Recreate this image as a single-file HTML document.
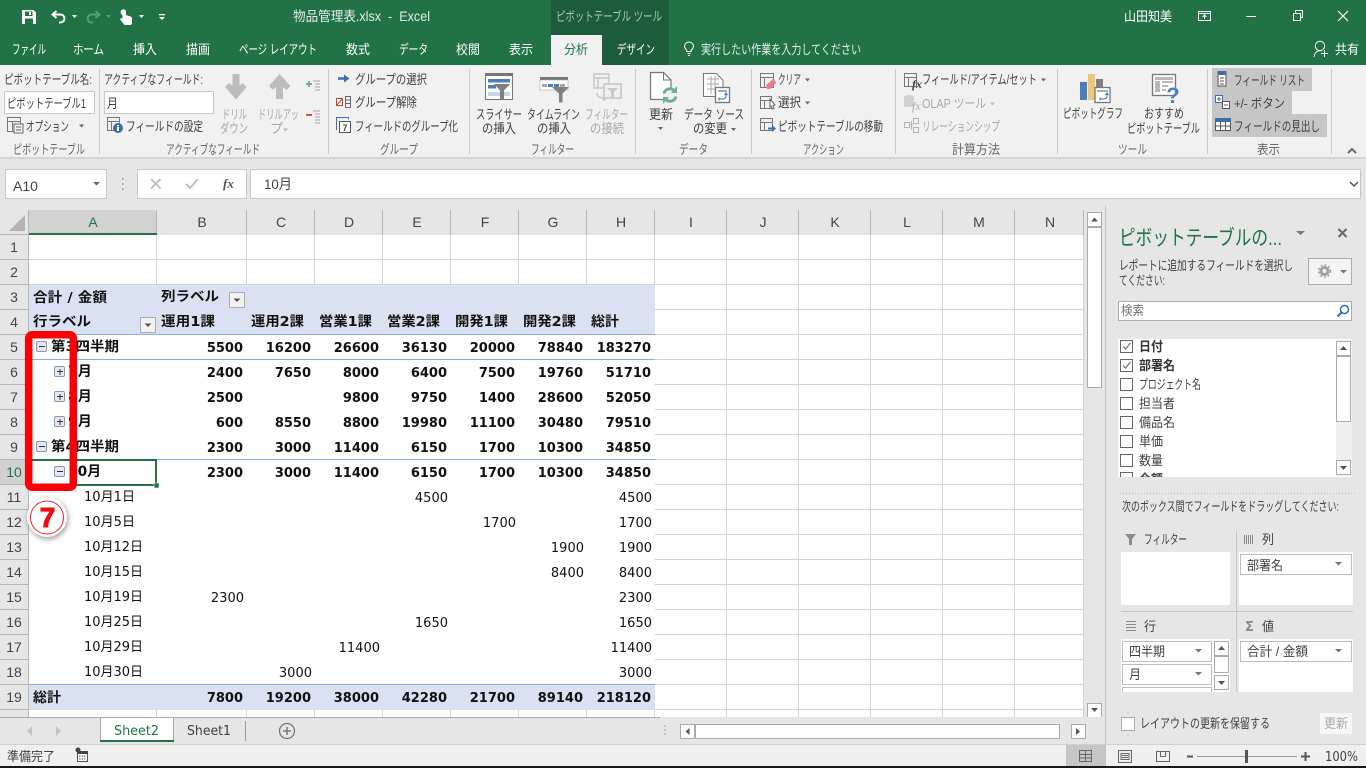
<!DOCTYPE html>
<html lang="ja"><head><meta charset="utf-8"><title>物品管理表.xlsx - Excel</title>
<style>
html,body{margin:0;padding:0;width:1366px;height:768px;overflow:hidden;background:#e6e6e6}
svg{display:block;position:absolute;left:0;top:0}
text{font-family:"Liberation Sans","Noto Sans CJK JP",sans-serif;font-size:13px;fill:#404040;white-space:pre}
.w{fill:#fff;font-size:13px}
.g{fill:#a8a8a8}
.l{fill:#666}
.c{font-family:"DejaVu Sans","Noto Sans CJK JP",sans-serif;font-size:13px;fill:#111}
.b{font-family:"DejaVu Sans","Noto Sans CJK JP",sans-serif;font-size:13px;font-weight:700;fill:#111}
.h{font-size:14px;fill:#444}
.n{text-anchor:middle}
.e{text-anchor:end}
.ln{shape-rendering:crispEdges}
</style></head><body>
<svg width="1366" height="768" viewBox="0 0 1366 768" xmlns="http://www.w3.org/2000/svg">
<!-- title bar -->
<rect width="1366" height="65" fill="#217346"/>
<rect x="551" width="118" height="65" fill="#1d5c3a"/>
<rect x="551" y="35" width="51" height="31" fill="#f1f1f1"/>
<path fill="#fff" fill-rule="evenodd" d="M22 10h11.500l2.500 2.500V24H22zM25 11.500v4.500h7.500v-4.500zM25 18.500V24h8v-5.500z"/>
<rect x="29" y="12" width="2" height="3" fill="#fff"/>
<path fill="none" stroke="#fff" stroke-width="2" d="M56.500 11L52.500 14.500l4 3.500M53 14.500h7.500a4 4 0 0 1 0 8h-1.500"/>
<path fill="#fff" d="M72 15h5l-2.500 3z"/>
<path fill="none" stroke="#5c9a79" stroke-width="2" d="M95.500 11l4 3.500-4 3.500M99 14.500h-7.500a4 4 0 0 0 0 8H93"/>
<path fill="#5c9a79" d="M106 15h5l-2.500 3z"/>
<path fill="#fff" d="M121 10.500a3 3 0 0 1 5 .5v4l4.500 1.500c1.500.6 1.500 1.500 1.500 2.500v4.500l-1 1.500h-6.500l-4-5c-.7-1.500.5-2.500 2-1.500V15.500a4 4 0 0 1-1.500-5z"/>
<path fill="#fff" d="M139 15h5l-2.500 3z"/>
<path fill="#fff" d="M159 14h6v1.300h-6zM159 17h6l-3 3z"/>
<text x="293" y="21" class="w" style="font-size:13.500px;fill:#e4eee8" textLength="137" lengthAdjust="spacingAndGlyphs">物品管理表.xlsx  -  Excel</text>
<text x="556" y="21" style="fill:#a9c8b6" textLength="106" lengthAdjust="spacingAndGlyphs">ピボットテーブル ツール</text>
<text x="1124" y="21" class="w" textLength="48" lengthAdjust="spacingAndGlyphs">山田知美</text>
<path fill="none" stroke="#fff" d="M1198.500 11.500h12v9h-12zM1198.500 13.500h12M1204.500 19v-4M1202.500 17l2-2 2 2"/>
<rect x="1246" y="16" width="10" height="1" fill="#fff"/>
<path fill="none" stroke="#fff" d="M1293.500 13.500h7v7h-7zM1295.500 13v-2.500h7v7H1301"/>
<path fill="none" stroke="#fff" stroke-width="1.100" d="M1338 11l10 10M1348 11l-10 10"/>
<!-- tabs -->
<text x="12" y="54" class="w" textLength="34" lengthAdjust="spacingAndGlyphs">ファイル</text>
<text x="73" y="54" class="w" textLength="31" lengthAdjust="spacingAndGlyphs">ホーム</text>
<text x="133" y="54" class="w" textLength="24" lengthAdjust="spacingAndGlyphs">挿入</text>
<text x="186" y="54" class="w" textLength="24" lengthAdjust="spacingAndGlyphs">描画</text>
<text x="239" y="54" class="w" textLength="78" lengthAdjust="spacingAndGlyphs">ページ レイアウト</text>
<text x="346" y="54" class="w" textLength="24" lengthAdjust="spacingAndGlyphs">数式</text>
<text x="399" y="54" class="w" textLength="29" lengthAdjust="spacingAndGlyphs">データ</text>
<text x="456" y="54" class="w" textLength="24" lengthAdjust="spacingAndGlyphs">校閲</text>
<text x="509" y="54" class="w" textLength="24" lengthAdjust="spacingAndGlyphs">表示</text>
<text x="564" y="54" style="fill:#217346" textLength="24" lengthAdjust="spacingAndGlyphs">分析</text>
<text x="617" y="54" class="w" textLength="38" lengthAdjust="spacingAndGlyphs">デザイン</text>
<path fill="none" stroke="#fff" stroke-width="1" d="M687 51.500c0-2-2.500-3-2.500-5a4.500 4.500 0 0 1 9 0c0 2-2.500 3-2.500 5zM687.500 53.500h3M688 55.500h2"/>
<text x="701" y="54" style="fill:#e6efe9" textLength="160" lengthAdjust="spacingAndGlyphs">実行したい作業を入力してください</text>
<circle cx="1320" cy="46" r="4.700" fill="none" stroke="#fff"/>
<path fill="none" stroke="#fff" d="M1314 57c.5-4 2.500-6 6-6.500M1321 53.500h7M1324.500 50v7"/>
<text x="1335" y="54" class="w" textLength="24" lengthAdjust="spacingAndGlyphs">共有</text>
<!-- ribbon -->
<rect y="65" width="1366" height="92" fill="#f1f1f1"/>
<rect y="157" width="1366" height="2" fill="#d5d5d5" class="ln"/>
<g fill="#c9c9c9" class="ln">
<rect x="99" y="69" width="1" height="85"/><rect x="328" y="69" width="1" height="85"/><rect x="469" y="69" width="1" height="85"/><rect x="635" y="69" width="1" height="85"/><rect x="751" y="69" width="1" height="85"/><rect x="895" y="69" width="1" height="85"/><rect x="1057" y="69" width="1" height="85"/><rect x="1207" y="69" width="1" height="85"/><rect x="1331" y="69" width="1" height="85"/>
</g>
<!-- pivot table group -->
<text x="4" y="84" textLength="88" lengthAdjust="spacingAndGlyphs">ピボットテーブル名:</text>
<rect x="4.500" y="91.500" width="90" height="22" fill="#fff" stroke="#c6c6c6"/>
<text x="7" y="108" textLength="79" lengthAdjust="spacingAndGlyphs">ピボットテーブル1</text>
<g fill="none" stroke="#777"><path d="M7.500 117.500h13v14h-13zM7.500 121.500h13M12.500 122v9"/></g>
<rect x="14" y="124" width="9" height="9" fill="#f1f1f1" stroke="#666"/>
<path d="M16 127h5M16 130h5" stroke="#666"/>
<text x="26" y="131" textLength="43" lengthAdjust="spacingAndGlyphs">オプション</text>
<path fill="#666" d="M79 124.500h5l-2.500 3z"/>
<text x="13" y="154" class="l" textLength="72" lengthAdjust="spacingAndGlyphs">ピボットテーブル</text>
<!-- active field -->
<text x="104" y="84" textLength="99" lengthAdjust="spacingAndGlyphs">アクティブなフィールド:</text>
<rect x="104.500" y="91.500" width="109" height="22" fill="#fff" stroke="#c6c6c6"/>
<text x="107" y="108" textLength="11" lengthAdjust="spacingAndGlyphs">月</text>
<path fill="none" stroke="#777" d="M107.500 117.500h12v13h-12zM107.500 121.500h12M111.500 122v8"/>
<circle cx="118" cy="128" r="5" fill="#3e6ea8"/><rect x="117" y="127" width="2" height="4" fill="#fff"/><rect x="117" y="125" width="2" height="1.300" fill="#fff"/>
<text x="126" y="131" textLength="77" lengthAdjust="spacingAndGlyphs">フィールドの設定</text>
<path fill="#bcbcbc" d="M232.500 74h7v12l3-3 4 4-10.500 12.500L225 87l4-4 3.500 3z"/>
<path fill="#bcbcbc" d="M276 99h7V87l3.500 3 4-4L279.500 74 269 86l4 4 3-3z"/>
<text x="222" y="119" class="g" textLength="25" lengthAdjust="spacingAndGlyphs">ドリル</text>
<text x="220" y="133" class="g" textLength="28" lengthAdjust="spacingAndGlyphs">ダウン</text>
<text x="258" y="119" class="g" textLength="41" lengthAdjust="spacingAndGlyphs">ドリルアッ</text>
<text x="270" y="133" class="g">プ</text>
<path fill="#bbb" d="M283 128.500h5l-2.500 3z"/>
<path d="M306 84h6M309 81v6" stroke="#6fb191" stroke-width="2" class="ln"/>
<path d="M313 81h7M315 84h5M315 87h5M315 90h5" stroke="#a5a5a5" class="ln"/>
<path d="M306 115h6" stroke="#d2573a" stroke-width="2" class="ln"/>
<path d="M313 111h7M315 114h5M315 117h5M315 120h5M315 123h5" stroke="#a5a5a5" class="ln"/>
<text x="166" y="154" class="l" textLength="94" lengthAdjust="spacingAndGlyphs">アクティブなフィールド</text>
<!-- group -->
<path d="M338 78.500h7" stroke="#3b70ad" stroke-width="2.500"/><path d="M344 74.500l5.500 4-5.500 4z" fill="#3b70ad"/>
<text x="355" y="84" textLength="72" lengthAdjust="spacingAndGlyphs">グループの選択</text>
<rect x="336.500" y="98.500" width="6" height="7" fill="#fff" stroke="#c8452a"/><path d="M337 105l5-6" stroke="#c8452a"/>
<path fill="none" stroke="#667" d="M345.500 96.500h5v11h-5zM346 100h4M346 103.500h4"/>
<text x="355" y="107" textLength="62" lengthAdjust="spacingAndGlyphs">グループ解除</text>
<path fill="none" stroke="#3e6ea8" d="M336.500 130v-12.500h12v2"/><rect x="339.500" y="121.500" width="11" height="11" fill="#fff" stroke="#555"/>
<text x="345" y="131" class="n" style="font-size:9px;font-weight:700;fill:#444">7</text>
<text x="355" y="131" textLength="103" lengthAdjust="spacingAndGlyphs">フィールドのグループ化</text>
<text x="380" y="154" class="l" textLength="38" lengthAdjust="spacingAndGlyphs">グループ</text>
<!-- filter -->
<rect x="485.500" y="74.500" width="27" height="25" fill="#fff" stroke="#777"/><rect x="485" y="73" width="28" height="3" fill="#777"/>
<rect x="488" y="79" width="22" height="3.500" fill="#4a7fbb"/><rect x="488" y="85" width="8" height="3.500" fill="#4a7fbb"/><rect x="488" y="92" width="22" height="4" fill="#c5d7ec"/>
<path fill="#808080" d="M494 84h16l-6 6.500V99h-4v-8.500z"/>
<rect x="540" y="77" width="28" height="3" fill="#777"/><rect x="540" y="80" width="28" height="10" fill="#fff" stroke="#999" stroke-width=".5"/>
<rect x="542" y="84" width="5" height="3" fill="#aaa"/><rect x="548" y="84" width="5" height="3" fill="#4a7fbb"/><rect x="554" y="84" width="5" height="3" fill="#4a7fbb"/><rect x="560" y="84" width="5" height="3" fill="#aaa"/>
<path fill="#808080" d="M552 87h17l-6.500 6.500v9h-3.500v-9z"/>
<path fill="none" stroke="#c8c8c8" stroke-width="1.500" d="M594 74h15v14h-15zM594 78h15M598 78v10M597 93c0 3 2 5 7 5"/><rect x="604" y="84" width="17" height="14" fill="#f0f0f0" stroke="#c4c4c4" stroke-width="1.500"/>
<path fill="#c8c8c8" d="M603 95l4 3.500-4 3.500zM607 88h11l-4 4v5h-3v-5z"/>
<text x="476" y="119" textLength="46" lengthAdjust="spacingAndGlyphs">スライサー</text>
<text x="482" y="133" textLength="34" lengthAdjust="spacingAndGlyphs">の挿入</text>
<text x="527" y="119" textLength="53" lengthAdjust="spacingAndGlyphs">タイムライン</text>
<text x="537" y="133" textLength="34" lengthAdjust="spacingAndGlyphs">の挿入</text>
<text x="585" y="119" class="g" textLength="43" lengthAdjust="spacingAndGlyphs">フィルター</text>
<text x="590" y="133" class="g" textLength="34" lengthAdjust="spacingAndGlyphs">の接続</text>
<text x="531" y="154" class="l" textLength="43" lengthAdjust="spacingAndGlyphs">フィルター</text>
<!-- data -->
<path fill="#fff" stroke="#777" stroke-width="1.200" d="M650.500 72.500h13l7.500 7.500v19.500h-20.500z"/><path fill="none" stroke="#777" d="M663.500 72.500v7.500h7.500"/>
<circle cx="670" cy="95" r="7" fill="#f1f1f1"/><path fill="none" stroke="#6fb091" stroke-width="3" d="M664 93.500a6 6 0 0 1 10.500-2.500M676 96.500a6 6 0 0 1-10.500 2.500"/><path fill="#6fb091" d="M677 86v7h-6zM663 104v-7h6z"/>
<path fill="#fff" stroke="#777" d="M703.500 73.500h13l6.500 7v16h-19.500z"/><path fill="none" stroke="#aaa" d="M707 79h12M707 84h12M707 89h12M711 76v18M715 76v18"/><rect x="715.500" y="87.500" width="14" height="15" fill="#fff" stroke="#777" stroke-width="1.300"/><rect x="718" y="90" width="9" height="2" fill="#aaa"/><path fill="none" stroke="#2f6fb5" d="M719 99h4a3 3 0 0 0 3-3v-2M719 97.500v3M724.500 95l1.500-2 1.500 2"/>
<text x="649" y="119" textLength="24" lengthAdjust="spacingAndGlyphs">更新</text>
<path fill="#666" d="M658 127h5l-2.500 3z"/>
<text x="684" y="119" textLength="60" lengthAdjust="spacingAndGlyphs">データ ソース</text>
<text x="693" y="133" textLength="34" lengthAdjust="spacingAndGlyphs">の変更</text>
<path fill="#666" d="M731 128h5l-2.500 3z"/>
<text x="679" y="154" class="l" textLength="29" lengthAdjust="spacingAndGlyphs">データ</text>
<!-- action -->
<path fill="none" stroke="#777" d="M760.500 73.500h13v14h-13zM760.500 77.500h13M764.500 78v9"/>
<path fill="#e9808f" d="M766 85l7-6 3.500 3.500-6.500 6.500h-3z"/>
<text x="778" y="84" textLength="23" lengthAdjust="spacingAndGlyphs">クリア</text>
<path fill="#666" d="M805 78.500h5l-2.500 3z"/>
<path fill="none" stroke="#777" d="M760.500 96.500h11v12h-11zM760.500 100.500h11M764.500 101v8"/>
<path fill="#fff" stroke="#666" d="M770 99l5 6-2 .5 1 3-1.500.5-1.500-3-1 1z"/>
<text x="778" y="107" textLength="23" lengthAdjust="spacingAndGlyphs">選択</text>
<path fill="#666" d="M805 101.500h5l-2.500 3z"/>
<path fill="none" stroke="#777" d="M760.500 118.500h12v12h-12zM760.500 122.500h12M764.500 123v8"/>
<path d="M768 128.500h5" stroke="#2f6fb5" stroke-width="2"/><path fill="#2f6fb5" d="M772 125l4 3.500-4 3.500z"/>
<text x="778" y="131" textLength="105" lengthAdjust="spacingAndGlyphs">ピボットテーブルの移動</text>
<text x="803" y="154" class="l" textLength="41" lengthAdjust="spacingAndGlyphs">アクション</text>
<!-- calc -->
<path fill="none" stroke="#777" d="M904.500 73.500h12v13h-12zM904.500 77.500h12M908.500 78v8"/>
<text x="912" y="88" style="font-family:'Liberation Serif',serif;font-style:italic;font-size:12px;font-weight:700;fill:#444">fx</text>
<text x="922" y="84" textLength="115" lengthAdjust="spacingAndGlyphs">フィールド/アイテム/セット</text>
<path fill="#666" d="M1041 78.500h5l-2.500 3z"/>
<ellipse cx="909" cy="97" rx="5" ry="2" fill="#d0d0d0"/><rect x="904" y="97" width="10" height="10" fill="#d0d0d0"/>
<text x="912" y="110" style="font-family:'Liberation Serif',serif;font-style:italic;font-size:12px;fill:#aaa">fx</text>
<text x="922" y="108" class="g" textLength="64" lengthAdjust="spacingAndGlyphs">OLAP ツール</text>
<path fill="#bbb" d="M990 102.500h5l-2.500 3z"/>
<path fill="none" stroke="#b5b5b5" d="M904.500 122.500h5v5h-5zM913.500 118.500h5v5h-5zM913.500 127.500h5v5h-5zM909.500 125h4M911.500 121v9"/>
<text x="922" y="131" class="g" textLength="78" lengthAdjust="spacingAndGlyphs">リレーションシップ</text>
<text x="952" y="154" class="l" textLength="48" lengthAdjust="spacingAndGlyphs">計算方法</text>
<!-- tools -->
<rect x="1080" y="82" width="7" height="18" fill="#4a7fbb"/><rect x="1088" y="74" width="7" height="26" fill="#eec77a"/><rect x="1096" y="79" width="7" height="8" fill="#808080"/>
<rect x="1095" y="87.500" width="15" height="15" fill="#fff" stroke="#777" stroke-width="1.300"/><rect x="1097" y="90" width="11" height="2" fill="#aaa"/><path fill="none" stroke="#2f6fb5" d="M1100 99h4a3 3 0 0 0 3-3v-2M1100 97.500v3M1105.500 95l1.500-2 1.500 2"/>
<rect x="1152.500" y="74.500" width="23" height="21" fill="#fff" stroke="#777" stroke-width="1.300"/><path fill="#b8b8b8" d="M1155 77h18v3h-18zM1155 81h5v11h-5zM1162 81h11v2h-11zM1162 85h6v2h-6zM1162 89h4v2h-4z"/>
<text x="1173" y="103" class="n" style="font-size:22px;font-weight:700;fill:#4a7fbb;font-family:'Liberation Sans',sans-serif">?</text>
<text x="1063" y="118" textLength="60" lengthAdjust="spacingAndGlyphs">ピボットグラフ</text>
<text x="1144" y="118" textLength="40" lengthAdjust="spacingAndGlyphs">おすすめ</text>
<text x="1127" y="133" textLength="73" lengthAdjust="spacingAndGlyphs">ピボットテーブル</text>
<text x="1118" y="154" class="l" textLength="29" lengthAdjust="spacingAndGlyphs">ツール</text>
<!-- show -->
<g fill="#c6c6c6"><rect x="1212" y="68" width="100" height="23"/><rect x="1212" y="91" width="80" height="23"/><rect x="1212" y="114" width="115" height="23"/></g>
<rect x="1218" y="72" width="8" height="14" fill="#fff" stroke="#555"/><rect x="1218" y="71" width="8" height="4" fill="#3e6ea8"/><path d="M1220 78h4M1220 81h4M1220 84h4" stroke="#555"/>
<rect x="1215.500" y="95.500" width="7" height="7" fill="#fff" stroke="#3e6ea8"/><path d="M1217 99h4M1219 97v4" stroke="#3e6ea8"/>
<rect x="1222.500" y="101.500" width="7" height="7" fill="#fff" stroke="#555"/><path d="M1224 105h4" stroke="#3e6ea8"/>
<rect x="1215.500" y="118.500" width="15" height="12" fill="#fff" stroke="#555"/><rect x="1215" y="118" width="16" height="4" fill="#3e6ea8"/><path d="M1216 126h14M1220.500 122v8M1225.500 122v8" stroke="#555"/>
<text x="1234" y="85" textLength="71" lengthAdjust="spacingAndGlyphs">フィールド リスト</text>
<text x="1234" y="108" textLength="51" lengthAdjust="spacingAndGlyphs">+/- ボタン</text>
<text x="1234" y="131" textLength="86" lengthAdjust="spacingAndGlyphs">フィールドの見出し</text>
<text x="1257" y="154" class="l" textLength="23" lengthAdjust="spacingAndGlyphs">表示</text>
<path fill="none" stroke="#666" stroke-width="2" d="M1348 153l4-4 4 4"/>
<!-- formula bar -->
<rect x="5.500" y="169.500" width="101" height="29" fill="#fff" stroke="#c6c6c6"/>
<text x="13" y="191" class="h">A10</text>
<path fill="#666" d="M93 182h7l-3.500 3.500z"/>
<path d="M122 179h1.500M122 184h1.500M122 189h1.500" stroke="#aaa" stroke-width="2"/>
<rect x="137.500" y="169.500" width="109" height="29" fill="#fff" stroke="#c6c6c6"/>
<rect x="250.500" y="169.500" width="1110" height="29" fill="#fff" stroke="#c6c6c6"/>
<path fill="none" stroke="#bdbdbd" stroke-width="1.800" d="M151 179l9.500 9.500M160.500 179l-9.500 9.500"/>
<path fill="none" stroke="#bdbdbd" stroke-width="2" d="M186 184l4 4 8-9"/>
<text x="223" y="188" style="font-family:'Liberation Serif',serif;font-style:italic;font-weight:700;font-size:13px;fill:#555">fx</text>
<text x="264" y="189" class="h" textLength="28" lengthAdjust="spacingAndGlyphs">10月</text>
<path fill="none" stroke="#555" stroke-width="1.500" d="M1350 182l4 4 4-4"/>
<!-- sheet area -->
<rect x="0" y="210" width="1084" height="507" fill="#fff"/>
<g stroke="#d4d4d4" class="ln">
<path d="M156.500 235V717M246.500 235V717M314.500 235V717M382.500 235V717M450.500 235V717M518.500 235V717M586.500 235V717M654.500 235V717M726.500 235V717M798.500 235V717M870.500 235V717M942.500 235V717M1014.500 235V717M1083.500 235V717"/>
<path d="M29 259.500H1084M29 284.500H1084M29 309.500H1084M29 334.500H1084M29 359.500H1084M29 384.500H1084M29 409.500H1084M29 434.500H1084M29 459.500H1084M29 484.500H1084M29 509.500H1084M29 534.500H1084M29 559.500H1084M29 584.500H1084M29 609.500H1084M29 634.500H1084M29 659.500H1084M29 684.500H1084M29 709.500H1084"/>
</g>
<rect x="29" y="285" width="626" height="425" fill="#fff"/>
<rect x="29" y="285" width="626" height="50" fill="#d9e1f2"/>
<rect x="29" y="685" width="626" height="25" fill="#d9e1f2"/>
<path d="M29 334.500H655M29 359.500H655M29 459.500H655M29 684.500H655" stroke="#8ea9db" class="ln"/>
<!-- headers -->
<rect x="0" y="210" width="1084" height="25" fill="#e6e6e6"/>
<rect x="0" y="235" width="28" height="482" fill="#e6e6e6"/>
<rect x="29" y="210" width="127" height="24" fill="#d2d2d2"/>
<rect x="29" y="233" width="128" height="2" fill="#217346"/>
<rect x="0" y="460" width="28" height="25" fill="#d2d2d2"/>
<path fill="#b4b4b4" d="M25 215v16H9z"/>
<g stroke="#b6b6b6" class="ln">
<path d="M28.500 210V717M156.500 210V233M246.500 210V235M314.500 210V235M382.500 210V235M450.500 210V235M518.500 210V235M586.500 210V235M654.500 210V235M726.500 210V235M798.500 210V235M870.500 210V235M942.500 210V235M1014.500 210V235M1083.500 210V235"/>
<path d="M0 234.500H28M0 259.500H28M0 284.500H28M0 309.500H28M0 334.500H28M0 359.500H28M0 384.500H28M0 409.500H28M0 434.500H28M0 459.500H28M0 484.500H28M0 509.500H28M0 534.500H28M0 559.500H28M0 584.500H28M0 609.500H28M0 634.500H28M0 659.500H28M0 684.500H28M0 709.500H28"/>
</g>
<g class="h">
<text x="93" y="227" class="h n" style="fill:#217346">A</text><text x="202" y="227" class="h n">B</text><text x="281" y="227" class="h n">C</text><text x="349" y="227" class="h n">D</text><text x="417" y="227" class="h n">E</text><text x="485" y="227" class="h n">F</text><text x="553" y="227" class="h n">G</text><text x="621" y="227" class="h n">H</text><text x="691" y="227" class="h n">I</text><text x="763" y="227" class="h n">J</text><text x="835" y="227" class="h n">K</text><text x="907" y="227" class="h n">L</text><text x="979" y="227" class="h n">M</text><text x="1050" y="227" class="h n">N</text>
<text x="14" y="252" class="h n">1</text><text x="14" y="277" class="h n">2</text><text x="14" y="302" class="h n">3</text><text x="14" y="327" class="h n">4</text><text x="14" y="352" class="h n">5</text><text x="14" y="377" class="h n">6</text><text x="14" y="402" class="h n">7</text><text x="14" y="427" class="h n">8</text><text x="14" y="452" class="h n">9</text><text x="14" y="477" class="h n" style="fill:#217346">10</text><text x="14" y="502" class="h n">11</text><text x="14" y="527" class="h n">12</text><text x="14" y="552" class="h n">13</text><text x="14" y="577" class="h n">14</text><text x="14" y="602" class="h n">15</text><text x="14" y="627" class="h n">16</text><text x="14" y="652" class="h n">17</text><text x="14" y="677" class="h n">18</text><text x="14" y="702" class="h n">19</text>
</g>
<!-- pivot headers -->
<text x="33" y="302" class="b" textLength="74" lengthAdjust="spacingAndGlyphs" style="font-size:13.500px">合計 / 金額</text>
<text x="161" y="301" class="b" textLength="58" lengthAdjust="spacingAndGlyphs" style="font-size:13.500px">列ラベル</text>
<text x="33" y="326" class="b" textLength="58" lengthAdjust="spacingAndGlyphs" style="font-size:13.500px">行ラベル</text>
<text x="161" y="326" class="b" textLength="54" lengthAdjust="spacingAndGlyphs" style="font-size:13.500px">運用1課</text>
<text x="251" y="326" class="b" textLength="53" lengthAdjust="spacingAndGlyphs" style="font-size:13.500px">運用2課</text>
<text x="319" y="326" class="b" textLength="53" lengthAdjust="spacingAndGlyphs" style="font-size:13.500px">営業1課</text>
<text x="387" y="326" class="b" textLength="53" lengthAdjust="spacingAndGlyphs" style="font-size:13.500px">営業2課</text>
<text x="455" y="326" class="b" textLength="53" lengthAdjust="spacingAndGlyphs" style="font-size:13.500px">開発1課</text>
<text x="523" y="326" class="b" textLength="53" lengthAdjust="spacingAndGlyphs" style="font-size:13.500px">開発2課</text>
<text x="591" y="326" class="b" textLength="28" lengthAdjust="spacingAndGlyphs" style="font-size:13.500px">総計</text>
<rect x="229.500" y="292.500" width="15" height="15" fill="#f2f2f2" stroke="#ababab"/><path fill="#555" d="M233.500 298.500h7l-3.500 3.500z"/>
<rect x="140.500" y="317.500" width="15" height="15" fill="#f2f2f2" stroke="#ababab"/><path fill="#555" d="M144.500 323.500h7l-3.500 3.500z"/>
<!-- row labels -->
<text x="51" y="351" class="b" textLength="68" lengthAdjust="spacingAndGlyphs" style="font-size:13.500px">第3四半期</text>
<text x="68" y="376" class="b" style="font-size:14px">7月</text><text x="68" y="401" class="b" style="font-size:14px">8月</text><text x="68" y="426" class="b" style="font-size:14px">9月</text>
<text x="51" y="451" class="b" textLength="68" lengthAdjust="spacingAndGlyphs" style="font-size:13.500px">第4四半期</text>
<text x="68" y="476" class="b" style="font-size:14px" textLength="33" lengthAdjust="spacingAndGlyphs">10月</text>
<text x="84" y="501" class="c" textLength="51" lengthAdjust="spacingAndGlyphs">10月1日</text>
<text x="84" y="526" class="c" textLength="51" lengthAdjust="spacingAndGlyphs">10月5日</text>
<text x="84" y="551" class="c" textLength="59" lengthAdjust="spacingAndGlyphs">10月12日</text>
<text x="84" y="576" class="c" textLength="59" lengthAdjust="spacingAndGlyphs">10月15日</text>
<text x="84" y="601" class="c" textLength="59" lengthAdjust="spacingAndGlyphs">10月19日</text>
<text x="84" y="626" class="c" textLength="59" lengthAdjust="spacingAndGlyphs">10月25日</text>
<text x="84" y="651" class="c" textLength="59" lengthAdjust="spacingAndGlyphs">10月29日</text>
<text x="84" y="676" class="c" textLength="59" lengthAdjust="spacingAndGlyphs">10月30日</text>
<text x="33" y="702" class="b" style="font-size:13.500px" textLength="28" lengthAdjust="spacingAndGlyphs">総計</text>
<!-- numbers -->
<g>
<text x="243" y="352" class="b e">5500</text><text x="311" y="352" class="b e">16200</text><text x="379" y="352" class="b e">26600</text><text x="447" y="352" class="b e">36130</text><text x="515" y="352" class="b e">20000</text><text x="583" y="352" class="b e">78840</text><text x="651" y="352" class="b e">183270</text>
<text x="243" y="377" class="b e">2400</text><text x="311" y="377" class="b e">7650</text><text x="379" y="377" class="b e">8000</text><text x="447" y="377" class="b e">6400</text><text x="515" y="377" class="b e">7500</text><text x="583" y="377" class="b e">19760</text><text x="651" y="377" class="b e">51710</text>
<text x="243" y="402" class="b e">2500</text><text x="379" y="402" class="b e">9800</text><text x="447" y="402" class="b e">9750</text><text x="515" y="402" class="b e">1400</text><text x="583" y="402" class="b e">28600</text><text x="651" y="402" class="b e">52050</text>
<text x="243" y="427" class="b e">600</text><text x="311" y="427" class="b e">8550</text><text x="379" y="427" class="b e">8800</text><text x="447" y="427" class="b e">19980</text><text x="515" y="427" class="b e">11100</text><text x="583" y="427" class="b e">30480</text><text x="651" y="427" class="b e">79510</text>
<text x="243" y="452" class="b e">2300</text><text x="311" y="452" class="b e">3000</text><text x="379" y="452" class="b e">11400</text><text x="447" y="452" class="b e">6150</text><text x="515" y="452" class="b e">1700</text><text x="583" y="452" class="b e">10300</text><text x="651" y="452" class="b e">34850</text>
<text x="243" y="477" class="b e">2300</text><text x="311" y="477" class="b e">3000</text><text x="379" y="477" class="b e">11400</text><text x="447" y="477" class="b e">6150</text><text x="515" y="477" class="b e">1700</text><text x="583" y="477" class="b e">10300</text><text x="651" y="477" class="b e">34850</text>
<text x="448" y="502" class="c e">4500</text><text x="652" y="502" class="c e">4500</text>
<text x="516" y="527" class="c e">1700</text><text x="652" y="527" class="c e">1700</text>
<text x="584" y="552" class="c e">1900</text><text x="652" y="552" class="c e">1900</text>
<text x="584" y="577" class="c e">8400</text><text x="652" y="577" class="c e">8400</text>
<text x="244" y="602" class="c e">2300</text><text x="652" y="602" class="c e">2300</text>
<text x="448" y="627" class="c e">1650</text><text x="652" y="627" class="c e">1650</text>
<text x="380" y="652" class="c e">11400</text><text x="652" y="652" class="c e">11400</text>
<text x="312" y="677" class="c e">3000</text><text x="652" y="677" class="c e">3000</text>
<text x="243" y="702" class="b e">7800</text><text x="311" y="702" class="b e">19200</text><text x="379" y="702" class="b e">38000</text><text x="447" y="702" class="b e">42280</text><text x="515" y="702" class="b e">21700</text><text x="583" y="702" class="b e">89140</text><text x="651" y="702" class="b e">218120</text>
</g>
<!-- expand buttons -->
<g fill="#e4e8f2" stroke="#8b95ab">
<rect x="36.500" y="341.500" width="10" height="10" rx="1.500"/><rect x="54.500" y="366.500" width="10" height="10" rx="1.500"/><rect x="54.500" y="391.500" width="10" height="10" rx="1.500"/><rect x="54.500" y="416.500" width="10" height="10" rx="1.500"/><rect x="36.500" y="441.500" width="10" height="10" rx="1.500"/><rect x="54.500" y="466.500" width="10" height="10" rx="1.500"/>
</g>
<path stroke="#333" class="ln" d="M39 346.500h6M57 371.500h6M60 369v6M57 396.500h6M60 394v6M57 421.500h6M60 419v6M39 446.500h6M57 471.500h6"/>
<!-- selection -->
<path fill="none" stroke="#217346" stroke-width="2" class="ln" d="M29 460h127v25H29"/>
<rect x="154" y="483" width="5" height="5" fill="#217346" stroke="#fff" stroke-width=".6"/>
<!-- red annotation -->
<rect x="28.700" y="334.700" width="44.600" height="152.500" rx="3.500" fill="none" stroke="#fb0007" stroke-width="7.500"/>
<circle cx="47" cy="517" r="20" fill="#fff" style="filter:drop-shadow(1px 2px 3px rgba(0,0,0,.4))"/>
<circle cx="47" cy="517.500" r="16.500" fill="#fff" stroke="#f4222a" stroke-width="1"/>
<text x="47.500" y="527" class="n" style="font-family:'Liberation Sans',sans-serif;font-size:28px;font-weight:700;fill:#f00a10;stroke:#f00a10;stroke-width:1">7</text>
<!-- vertical scrollbar -->
<rect x="1085" y="210" width="18" height="507" fill="#e6e6e6"/>
<rect x="1087.500" y="212.500" width="14" height="14" fill="#fff" stroke="#ababab"/><path fill="#555" d="M1091 221.500h7l-3.500-4z"/>
<rect x="1087.500" y="227.500" width="14" height="160" fill="#fff" stroke="#ababab"/>
<rect x="1087.500" y="703.500" width="14" height="14" fill="#fff" stroke="#ababab"/><path fill="#555" d="M1091 708h7l-3.500 4z"/>
<!-- sheet tabs -->
<rect x="0" y="717" width="1105" height="28" fill="#e6e6e6"/>
<path stroke="#ababab" class="ln" d="M0 717.500H100M173 717.500H660"/>
<path fill="#c2c2c2" d="M32 726v10l-5-5zM56 726v10l5-5z"/>
<path fill="#fff" stroke="#ababab" d="M100.500 742V717.500h73V742"/>
<rect x="100" y="740" width="74" height="2" fill="#217346"/>
<text x="114" y="735" style="font-size:13px;fill:#217346;font-family:'DejaVu Sans',sans-serif" textLength="45" lengthAdjust="spacingAndGlyphs">Sheet2</text>
<text x="187" y="735" style="font-size:13px;font-family:'DejaVu Sans',sans-serif" textLength="44" lengthAdjust="spacingAndGlyphs">Sheet1</text>
<path stroke="#999" class="ln" d="M245.500 721V741"/>
<circle cx="287" cy="731" r="7.500" fill="none" stroke="#777" stroke-width="1.300"/><path d="M283 731h8M287 727v8" stroke="#777" stroke-width="1.500"/>
<path stroke="#999" d="M664 726h2M664 730h2M664 734h2"/>
<rect x="680.500" y="724.500" width="14" height="14" fill="#fff" stroke="#ababab"/><path fill="#555" d="M689.500 728v7l-4-3.500z"/>
<rect x="695.500" y="724.500" width="364" height="14" fill="#fff" stroke="#ababab"/>
<rect x="1071.500" y="724.500" width="14" height="14" fill="#fff" stroke="#ababab"/><path fill="#555" d="M1076 728v7l4-3.500z"/>
<!-- status bar -->
<rect y="745" width="1366" height="21" fill="#f0f0f0"/>
<rect y="744" width="1366" height="1" fill="#d0d0d0"/>
<rect y="766" width="1366" height="2" fill="#1a1a1a"/>
<text x="7" y="761" textLength="48" lengthAdjust="spacingAndGlyphs">準備完了</text>
<rect x="77.500" y="751.500" width="10" height="10" fill="#fff" stroke="#555"/><rect x="77" y="751" width="11" height="3" fill="#444"/><circle cx="78" cy="750" r="2.500" fill="#444"/><path d="M79 756h7M79 759h7" stroke="#555" stroke-dasharray="1.500 1"/>
<rect x="1066" y="745" width="40" height="21" fill="#c6c6c6"/>
<path fill="none" stroke="#666" d="M1079.500 750.500h12v11h-12zM1080 754.500h11M1080 758h11M1085.500 751v10"/>
<path fill="none" stroke="#666" d="M1118.500 750.500h13v12h-13zM1121 753.500h8v6h-8zM1122 755.500h6M1122 757.500h6"/>
<path fill="none" stroke="#666" d="M1156.500 751.500h13v10h-13zM1160.500 751.500v5h5v-5"/>
<path d="M1187 756.500h6" stroke="#555" stroke-width="2" class="ln"/>
<path d="M1197 756.500h100" stroke="#999" class="ln"/>
<rect x="1245" y="750" width="3" height="13" fill="#555"/>
<path d="M1301 756.500h9M1305.500 752v9" stroke="#555" stroke-width="2" class="ln"/>
<text x="1325" y="761" style="font-size:13px;font-family:'DejaVu Sans',sans-serif" textLength="33" lengthAdjust="spacingAndGlyphs">100%</text>
<!-- pane -->
<rect x="1105" y="205" width="1" height="540" fill="#c6c6c6"/>
<text x="1119" y="245" style="font-size:21px;fill:#217346" textLength="163" lengthAdjust="spacingAndGlyphs">ピボットテーブルの...</text>
<path fill="#777" d="M1296 231h9l-4.500 4z"/>
<path fill="none" stroke="#666" stroke-width="2" d="M1338.500 229l8 8M1346.500 229l-8 8"/>
<text x="1119" y="270" textLength="174" lengthAdjust="spacingAndGlyphs">レポートに追加するフィールドを選択し</text>
<text x="1119" y="285" textLength="46" lengthAdjust="spacingAndGlyphs">てください:</text>
<rect x="1308.500" y="258.500" width="43" height="26" fill="#f4f4f4" stroke="#ababab"/>
<circle cx="1324.500" cy="271" r="3.500" fill="none" stroke="#a0a0a0" stroke-width="3"/><circle cx="1324.500" cy="271" r="6" fill="none" stroke="#a0a0a0" stroke-width="1.500" stroke-dasharray="2 2"/>
<path fill="#777" d="M1340 270h7l-3.500 3.500z"/>
<rect x="1118.500" y="301.500" width="233" height="19" fill="#fff" stroke="#ababab"/>
<text x="1121" y="315" style="fill:#777" textLength="23" lengthAdjust="spacingAndGlyphs">検索</text>
<circle cx="1344.500" cy="309.500" r="4" fill="none" stroke="#2f6fb5" stroke-width="1.500"/><path d="M1341.500 312.500l-4 4" stroke="#2f6fb5" stroke-width="2"/>
<rect x="1118" y="339" width="234" height="138" fill="#fff"/>
<g fill="#fff" stroke="#666">
<rect x="1120.500" y="340.500" width="12" height="12"/><rect x="1120.500" y="359.500" width="12" height="12"/><rect x="1120.500" y="378.500" width="12" height="12"/><rect x="1120.500" y="397.500" width="12" height="12"/><rect x="1120.500" y="416.500" width="12" height="12"/><rect x="1120.500" y="435.500" width="12" height="12"/><rect x="1120.500" y="454.500" width="12" height="12"/>
</g>
<path fill="none" stroke="#777" stroke-width="1.300" d="M1123 346.500l2.500 2.500 5-6M1123 365.500l2.500 2.500 5-6"/>
<text x="1139" y="351" style="font-weight:700;fill:#333" textLength="24" lengthAdjust="spacingAndGlyphs">日付</text>
<text x="1139" y="370" style="font-weight:700;fill:#333" textLength="36" lengthAdjust="spacingAndGlyphs">部署名</text>
<text x="1139" y="389" textLength="62" lengthAdjust="spacingAndGlyphs">プロジェクト名</text>
<text x="1139" y="408" textLength="36" lengthAdjust="spacingAndGlyphs">担当者</text>
<text x="1139" y="427" textLength="36" lengthAdjust="spacingAndGlyphs">備品名</text>
<text x="1139" y="446" textLength="24" lengthAdjust="spacingAndGlyphs">単価</text>
<text x="1139" y="465" textLength="24" lengthAdjust="spacingAndGlyphs">数量</text>
<rect x="1336" y="340" width="16" height="136" fill="#f0f0f0"/>
<rect x="1336.500" y="341.500" width="14" height="14" fill="#fff" stroke="#ababab"/><path fill="#555" d="M1340 350h7l-3.500-4z"/>
<rect x="1336.500" y="356.500" width="14" height="65" fill="#fff" stroke="#ababab"/>
<rect x="1336.500" y="460.500" width="14" height="14" fill="#fff" stroke="#ababab"/><path fill="#555" d="M1340 466h7l-3.500 4z"/>
<g>
<svg x="1118" y="472" width="218" height="5"><rect x="2.500" y="0.500" width="12" height="12" fill="#fff" stroke="#666"/><text x="21" y="12" textLength="24" lengthAdjust="spacingAndGlyphs" style="font-weight:700">金額</text></svg>
</g>
<path stroke="#bbb" stroke-dasharray="1 2" d="M1120 493.500h236" class="ln"/>
<text x="1122" y="511" textLength="217" lengthAdjust="spacingAndGlyphs">次のボックス間でフィールドをドラッグしてください:</text>
<path fill="#8a8a8a" d="M1125 534h11l-4 5v6h-3v-6z"/>
<text x="1144" y="544" textLength="43" lengthAdjust="spacingAndGlyphs">フィルター</text>
<path stroke="#8a8a8a" class="ln" stroke-width="1" d="M1244.500 535v9M1246.500 535v9M1248.500 535v9M1250.500 535v9M1252.500 535v9"/>
<text x="1262" y="544" textLength="12" lengthAdjust="spacingAndGlyphs">列</text>
<rect x="1121" y="552" width="109" height="53" fill="#fff"/>
<rect x="1239" y="552" width="114" height="53" fill="#fff"/>
<rect x="1240.500" y="554.500" width="111" height="20" fill="#fff" stroke="#bdbdbd"/>
<text x="1247" y="570" textLength="36" lengthAdjust="spacingAndGlyphs">部署名</text>
<path fill="#777" d="M1335 562h7l-3.500 3.500z"/>
<path stroke="#c6c6c6" class="ln" d="M1121 611.500h232M1236.500 531v161"/>
<path stroke="#8a8a8a" class="ln" d="M1126 621.500h10M1126 624.500h10M1126 627.500h10M1126 630.500h10"/>
<text x="1144" y="631" textLength="12" lengthAdjust="spacingAndGlyphs">行</text>
<text x="1245" y="631" style="font-size:13px;font-weight:700;fill:#8a8a8a;font-family:'DejaVu Sans',sans-serif">Σ</text>
<text x="1262" y="631" textLength="12" lengthAdjust="spacingAndGlyphs">値</text>
<rect x="1121" y="639" width="109" height="53" fill="#fff"/>
<rect x="1239" y="639" width="114" height="53" fill="#fff"/>
<rect x="1122.500" y="641.500" width="89" height="20" fill="#fff" stroke="#bdbdbd"/>
<rect x="1122.500" y="664.500" width="89" height="20" fill="#fff" stroke="#bdbdbd"/>
<path fill="#fff" stroke="#bdbdbd" d="M1122.500 692v-4.500h89v4.500"/>
<text x="1129" y="656" textLength="36" lengthAdjust="spacingAndGlyphs">四半期</text>
<text x="1129" y="679" textLength="12" lengthAdjust="spacingAndGlyphs">月</text>
<path fill="#777" d="M1195 649h7l-3.500 3.500zM1195 672h7l-3.500 3.500z"/>
<rect x="1214.500" y="641.500" width="14" height="14" fill="#fff" stroke="#ababab"/><path fill="#555" d="M1218 650h7l-3.500-4z"/>
<rect x="1214.500" y="656.500" width="14" height="16" fill="#fff" stroke="#ababab"/>
<rect x="1214.500" y="675.500" width="14" height="14" fill="#fff" stroke="#ababab"/><path fill="#555" d="M1218 681h7l-3.500 4z"/>
<rect x="1240.500" y="641.500" width="111" height="20" fill="#fff" stroke="#bdbdbd"/>
<text x="1247" y="656" textLength="61" lengthAdjust="spacingAndGlyphs">合計 / 金額</text>
<path fill="#777" d="M1335 649h7l-3.500 3.500z"/>
<rect x="1121.500" y="717.500" width="13" height="13" fill="#fff" stroke="#ababab"/>
<text x="1140" y="728" textLength="130" lengthAdjust="spacingAndGlyphs">レイアウトの更新を保留する</text>
<rect x="1320" y="713" width="32" height="21" fill="#f6f6f6"/>
<text x="1324" y="728" class="g" textLength="24" lengthAdjust="spacingAndGlyphs">更新</text>
</svg>
</body></html>
